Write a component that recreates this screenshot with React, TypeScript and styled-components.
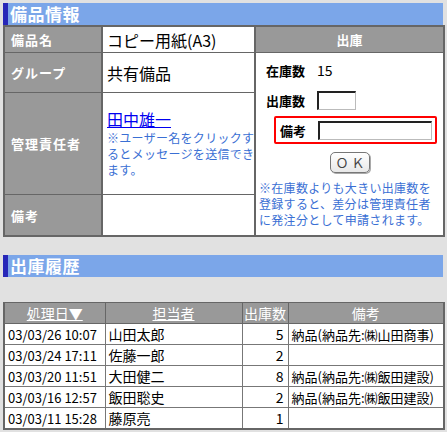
import React from "react";
import styled, { createGlobalStyle } from "styled-components";

const Global = createGlobalStyle`
  html, body { margin: 0; padding: 0; background: #e1e1e1; }
  body { font-family: "Noto Sans CJK JP", "Noto Sans", sans-serif; color: #000; }
`;

const Page = styled.div`
  padding: 3px 0 0 3px;
  width: 440px;
  display: flex;
  flex-direction: column;
`;

const SectionTitle = styled.div<{ $mt?: number }>`
  height: 22px;
  margin-top: ${(p) => p.$mt ?? 0}px;
  background: #7ba6e9;
  border-left: 5px solid #2727b8;
  color: #fff;
  font-weight: bold;
  font-size: 17px;
  line-height: 22px;
  padding-left: 2px;
  box-sizing: border-box;
  letter-spacing: 0.5px;
`;

const InfoTable = styled.table`
  width: 100%;
  border-collapse: collapse;
  border: 2px solid #666;
  background: #fff;
  table-layout: fixed;
`;

const Col = styled.col<{ $w: number }>`
  width: ${(p) => p.$w}px;
`;

const LabelCell = styled.td<{ $h: number }>`
  height: ${(p) => p.$h}px;
  background: #999;
  color: #fff;
  font-weight: bold;
  font-size: 13px;
  padding: 0 0 0 6px;
  border: 1px solid #666;
  border-right: 2px solid #666;
  letter-spacing: 1px;
`;

const ValueCell = styled.td`
  padding: 0 0 0 4px;
  font-size: 16px;
  border: 1px solid #666;
  vertical-align: middle;
`;

const PanelHead = styled.td`
  background: #999;
  color: #fff;
  font-weight: bold;
  font-size: 13px;
  text-align: center;
  border: 1px solid #666;
  border-left: 2px solid #666;
`;

const PanelCell = styled.td`
  border: 1px solid #666;
  border-left: 2px solid #666;
  vertical-align: top;
  padding: 0;
`;

const Panel = styled.div`
  display: flex;
  flex-direction: column;
  padding: 7px 0 0 10px;
`;

const PanelRow = styled.div<{ $mt?: number }>`
  display: flex;
  align-items: center;
  height: 20px;
  margin-top: ${(p) => p.$mt ?? 0}px;
`;

const PanelLabel = styled.span<{ $w: number }>`
  width: ${(p) => p.$w}px;
  font-weight: bold;
  font-size: 13px;
  flex-shrink: 0;
`;

const PanelValue = styled.span`
  font-size: 14px;
`;

const TextBox = styled.input<{ $w: number }>`
  width: ${(p) => p.$w}px;
  height: 19px;
  box-sizing: border-box;
  border: 1px solid #bbb;
  border-top: 2px solid #222;
  border-left: 2px solid #222;
  padding: 0;
  margin: 0;
  background: #fff;
`;

const Highlight = styled.div`
  margin: 6px 0 0 8px;
  width: 163px;
  height: 28px;
  box-sizing: border-box;
  border: 2px solid #f00;
  border-radius: 2px;
  display: flex;
  align-items: center;
  padding-left: 4px;
`;

const OkButton = styled.button`
  align-self: flex-start;
  margin: 8px 0 0 64px;
  width: 40px;
  height: 21px;
  border: 1px solid #777;
  border-radius: 5px;
  background: linear-gradient(#fff, #e8e8e8);
  box-shadow: 1px 1px 0 #aaa;
  font-family: "Noto Sans CJK JP", sans-serif;
  font-size: 13px;
  color: #444;
  letter-spacing: 3px;
  padding: 0 0 0 3px;
  line-height: 19px;
`;

const Note = styled.div<{ $w: number; $mt?: number }>`
  width: ${(p) => p.$w}px;
  margin-top: ${(p) => p.$mt ?? 0}px;
  font-size: 12px;
  line-height: 16px;
  color: #3a6fd4;
  letter-spacing: 0.3px;
`;

const PanelNote = styled(Note)`
  margin-left: -7px;
`;

const UserLink = styled.a`
  color: #0000f0;
  font-size: 16px;
  text-decoration: underline;
  line-height: 20px;
  display: block;
  margin-bottom: 1px;
`;

const HistoryTable = styled.table`
  margin-top: 25px;
  width: 100%;
  border-collapse: collapse;
  border: 2px solid #666;
  border-top-width: 1px;
  background: #fff;
  table-layout: fixed;
  font-size: 14px;
`;

const HeadCell = styled.th`
  height: 20px;
  background: #999;
  color: #fff;
  font-weight: normal;
  border: 1px solid #666;
  padding: 0;
  text-align: center;
`;

const HeadLink = styled.a`
  color: #fff;
  text-decoration: underline;
`;

const Cell = styled.td<{ $right?: boolean; $size?: number }>`
  height: 20px;
  border: 1px solid #777;
  padding: 0 ${(p) => (p.$right ? "4px" : "0")} 0 ${(p) => (p.$right ? "0" : "3px")};
  text-align: ${(p) => (p.$right ? "right" : "left")};
  font-size: ${(p) => p.$size ?? 14}px;
  white-space: nowrap;
  overflow: hidden;
`;

const history = [
  { date: "03/03/26 10:07", user: "山田太郎", qty: 5, note: "納品(納品先:㈱山田商事)" },
  { date: "03/03/24 17:11", user: "佐藤一郎", qty: 2, note: "" },
  { date: "03/03/20 11:51", user: "大田健二", qty: 8, note: "納品(納品先:㈱飯田建設)" },
  { date: "03/03/16 12:57", user: "飯田聡史", qty: 2, note: "納品(納品先:㈱飯田建設)" },
  { date: "03/03/11 15:28", user: "藤原亮", qty: 1, note: "" },
];

export default function App() {
  return (
    <>
      <Global />
      <Page>
        <SectionTitle>備品情報</SectionTitle>
        <InfoTable>
          <colgroup>
            <Col $w={98} />
            <Col $w={153} />
            <Col $w={189} />
          </colgroup>
          <tbody>
            <tr>
              <LabelCell $h={25}>備品名</LabelCell>
              <ValueCell>コピー用紙(A3)</ValueCell>
              <PanelHead>出庫</PanelHead>
            </tr>
            <tr>
              <LabelCell $h={39}>グループ</LabelCell>
              <ValueCell>共有備品</ValueCell>
              <PanelCell rowSpan={3}>
                <Panel>
                  <PanelRow>
                    <PanelLabel $w={51}>在庫数</PanelLabel>
                    <PanelValue>15</PanelValue>
                  </PanelRow>
                  <PanelRow $mt={10}>
                    <PanelLabel $w={51}>出庫数</PanelLabel>
                    <TextBox $w={39} />
                  </PanelRow>
                  <Highlight>
                    <PanelLabel $w={38}>備考</PanelLabel>
                    <TextBox $w={114} />
                  </Highlight>
                  <OkButton>ＯＫ</OkButton>
                  <PanelNote $w={180} $mt={7}>
                    ※在庫数よりも大きい出庫数を登録すると、差分は管理責任者に発注分として申請されます。
                  </PanelNote>
                </Panel>
              </PanelCell>
            </tr>
            <tr>
              <LabelCell $h={101}>管理責任者</LabelCell>
              <ValueCell>
                <UserLink href="#">田中雄一</UserLink>
                <Note $w={150}>※ユーザー名をクリックするとメッセージを送信できます。</Note>
              </ValueCell>
            </tr>
            <tr>
              <LabelCell $h={40}>備考</LabelCell>
              <ValueCell />
            </tr>
          </tbody>
        </InfoTable>

        <SectionTitle $mt={18}>出庫履歴</SectionTitle>
        <HistoryTable>
          <colgroup>
            <Col $w={101} />
            <Col $w={137} />
            <Col $w={46} />
            <Col $w={156} />
          </colgroup>
          <thead>
            <tr>
              <HeadCell>
                <HeadLink href="#">処理日▼</HeadLink>
              </HeadCell>
              <HeadCell>
                <HeadLink href="#">担当者</HeadLink>
              </HeadCell>
              <HeadCell>出庫数</HeadCell>
              <HeadCell>備考</HeadCell>
            </tr>
          </thead>
          <tbody>
            {history.map((h) => (
              <tr key={h.date}>
                <Cell $size={13}>{h.date}</Cell>
                <Cell>{h.user}</Cell>
                <Cell $right>{h.qty}</Cell>
                <Cell $size={13}>{h.note}</Cell>
              </tr>
            ))}
          </tbody>
        </HistoryTable>
      </Page>
    </>
  );
}
